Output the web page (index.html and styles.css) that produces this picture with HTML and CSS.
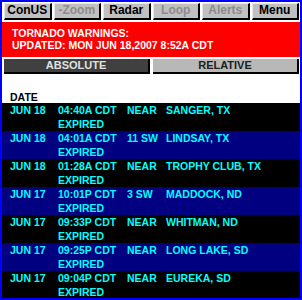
FILE: index.html
```html
<!DOCTYPE html>
<html lang="en">
<head>
	<meta charset="UTF-8">
	<link rel="stylesheet" href="styles.css">
</head>
<body>
<div id="wrap">
	<ul id="tools">
		<li>ConUS</li>
		<li class="off">-Zoom</li>
		<li>Radar</li>
		<li class="off">Loop</li>
		<li class="off">Alerts</li>
		<li>Menu</li>
	</ul>
	<div id="alert">
		<p>TORNADO WARNINGS:</p>
		<p>UPDATED: MON JUN 18,2007 8:52A CDT</p>
	</div>
	<ul id="tabs">
		<li class="active">ABSOLUTE</li>
		<li>RELATIVE</li>
	</ul>
	<div id="head">DATE</div>
	<ul id="list">
		<li><span>JUN 18</span><span>04:40A CDT</span><span>NEAR</span><span>SANGER, TX</span><span></span><span>EXPIRED</span></li>
		<li><span>JUN 18</span><span>04:01A CDT</span><span>11 SW</span><span>LINDSAY, TX</span><span></span><span>EXPIRED</span></li>
		<li><span>JUN 18</span><span>01:28A CDT</span><span>NEAR</span><span>TROPHY CLUB, TX</span><span></span><span>EXPIRED</span></li>
		<li><span>JUN 17</span><span>10:01P CDT</span><span>3 SW</span><span>MADDOCK, ND</span><span></span><span>EXPIRED</span></li>
		<li><span>JUN 17</span><span>09:33P CDT</span><span>NEAR</span><span>WHITMAN, ND</span><span></span><span>EXPIRED</span></li>
		<li><span>JUN 17</span><span>09:25P CDT</span><span>NEAR</span><span>LONG LAKE, SD</span><span></span><span>EXPIRED</span></li>
		<li><span>JUN 17</span><span>09:04P CDT</span><span>NEAR</span><span>EUREKA, SD</span><span></span><span>EXPIRED</span></li>
	</ul>
</div>
</body>
</html>
```

FILE: styles.css
```css
*{
	margin:0; padding:0; list-style:none;
	box-sizing:border-box;
}
body{
	font-family:"Liberation Sans", Arial, sans-serif;
	font-weight:bold; font-size:10.5px;
}
#wrap{
	width:302px; height:300px;
	border:2px solid #0000ff;
	background:#fff;
	overflow:hidden;
}

#tools{
	display:grid; grid-template-columns:repeat(6, 1fr);
	gap:2px;
	padding:1px 1px 0 2px;
	height:18px;
}
#tools li{
	height:17px;
	background:#c0c0c0;
	border-right:2px solid #000; border-bottom:2px solid #000;
	border-top:1px solid #e8e8e8; border-left:1px solid #e8e8e8;
	font-size:12px; text-align:center; line-height:13px;
	color:#000;
}
#tools .off{
	color:#8c8c8c;
}

#alert{
	margin-top:2px;
	height:35px;
	background:#ff0000; color:#fff;
	padding:5px 0 0 10px;
	line-height:12px;
}

#tabs{
	display:flex; gap:3px;
	padding:2px 1px 0 2px;
}
#tabs li{
	flex:1; height:15px;
	background:#b8b8b8; color:#202020;
	border-right:2px solid #000; border-bottom:2px solid #000;
	font-size:11px; text-align:center; line-height:13px;
}
#tabs .active{
	background:#404040; color:#e0e0e0;
}

#head{
	height:29px;
	padding:17px 0 0 8px;
	line-height:12px;
	color:#000;
}

#list li{
	display:grid;
	grid-template-columns:48px 69px 39px auto;
	padding-left:8px;
	height:28px; line-height:13px;
	padding-top:1px;
	color:#00ffff;
	background:#000;
}
#list li:nth-child(even){
	background:#000080;
}
#list span{
	white-space:nowrap;
}
```
